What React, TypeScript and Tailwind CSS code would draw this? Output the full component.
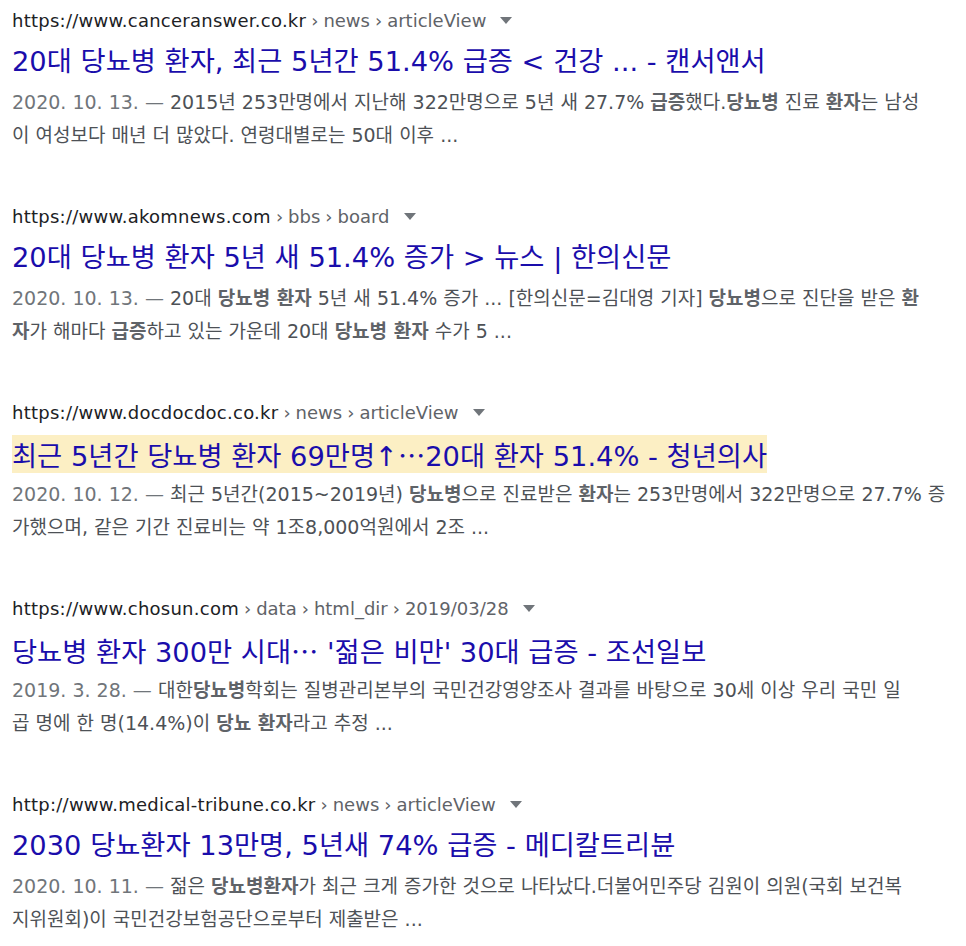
import React from 'react';

type Seg = { t: string; b?: boolean };

interface Result {
  domain: string;
  crumbs: string[];
  title: string;
  highlight?: boolean;
  date: string;
  lines: Seg[][];
}

const results: Result[] = [
  {
    domain: 'https://www.canceranswer.co.kr',
    crumbs: ['news', 'articleView'],
    title: '20대 당뇨병 환자, 최근 5년간 51.4% 급증 < 건강 ... - 캔서앤서',
    date: '2020. 10. 13.',
    lines: [
      [
        { t: '2015년 253만명에서 지난해 322만명으로 5년 새 27.7% ' },
        { t: '급증', b: true },
        { t: '했다.' },
        { t: '당뇨병', b: true },
        { t: ' 진료 ' },
        { t: '환자', b: true },
        { t: '는 남성' },
      ],
      [{ t: '이 여성보다 매년 더 많았다. 연령대별로는 50대 이후 ...' }],
    ],
  },
  {
    domain: 'https://www.akomnews.com',
    crumbs: ['bbs', 'board'],
    title: '20대 당뇨병 환자 5년 새 51.4% 증가 > 뉴스 | 한의신문',
    date: '2020. 10. 13.',
    lines: [
      [
        { t: '20대 ' },
        { t: '당뇨병 환자', b: true },
        { t: ' 5년 새 51.4% 증가 ... [한의신문=김대영 기자] ' },
        { t: '당뇨병', b: true },
        { t: '으로 진단을 받은 ' },
        { t: '환', b: true },
      ],
      [
        { t: '자', b: true },
        { t: '가 해마다 ' },
        { t: '급증', b: true },
        { t: '하고 있는 가운데 20대 ' },
        { t: '당뇨병 환자', b: true },
        { t: ' 수가 5 ...' },
      ],
    ],
  },
  {
    domain: 'https://www.docdocdoc.co.kr',
    crumbs: ['news', 'articleView'],
    title: '최근 5년간 당뇨병 환자 69만명↑…20대 환자 51.4% - 청년의사',
    highlight: true,
    date: '2020. 10. 12.',
    lines: [
      [
        { t: '최근 5년간(2015~2019년) ' },
        { t: '당뇨병', b: true },
        { t: '으로 진료받은 ' },
        { t: '환자', b: true },
        { t: '는 253만명에서 322만명으로 27.7% 증' },
      ],
      [{ t: '가했으며, 같은 기간 진료비는 약 1조8,000억원에서 2조 ...' }],
    ],
  },
  {
    domain: 'https://www.chosun.com',
    crumbs: ['data', 'html_dir', '2019/03/28'],
    title: "당뇨병 환자 300만 시대… '젊은 비만' 30대 급증 - 조선일보",
    date: '2019. 3. 28.',
    lines: [
      [
        { t: '대한' },
        { t: '당뇨병', b: true },
        { t: '학회는 질병관리본부의 국민건강영양조사 결과를 바탕으로 30세 이상 우리 국민 일' },
      ],
      [
        { t: '곱 명에 한 명(14.4%)이 ' },
        { t: '당뇨 환자', b: true },
        { t: '라고 추정 ...' },
      ],
    ],
  },
  {
    domain: 'http://www.medical-tribune.co.kr',
    crumbs: ['news', 'articleView'],
    title: '2030 당뇨환자 13만명, 5년새 74% 급증 - 메디칼트리뷴',
    date: '2020. 10. 11.',
    lines: [
      [
        { t: '젊은 ' },
        { t: '당뇨병환자', b: true },
        { t: '가 최근 크게 증가한 것으로 나타났다.더불어민주당 김원이 의원(국회 보건복' },
      ],
      [{ t: '지위원회)이 국민건강보험공단으로부터 제출받은 ...' }],
    ],
  },
];

const CJK = '"Noto Sans CJK KR", sans-serif';

// the midline ellipsis comes from the Korean font, not DejaVu
function TitleText({ text }: { text: string }) {
  const parts = text.split('…');
  return (
    <>
      {parts.map((p, i) => (
        <React.Fragment key={i}>
          {i > 0 && <span style={{ fontFamily: CJK }}>…</span>}
          {p}
        </React.Fragment>
      ))}
    </>
  );
}

function Caret() {
  return (
    <svg width="12" height="8" viewBox="0 0 12 8" className="ml-[14px] shrink-0">
      <path d="M0 0h12L6 7z" fill="#70757a" />
    </svg>
  );
}

function ResultItem({ r }: { r: Result }) {
  return (
    <div className="flex flex-col">
      <div className="flex items-center h-[27px] text-[18px] leading-[27px] whitespace-nowrap">
        <span className="text-[#202124] tracking-[0.25px]">{r.domain}</span>
        {r.crumbs.map((c) => (
          <span key={c} className="text-[#5f6368]">
            <span className="mx-[5px]">›</span>
            {c}
          </span>
        ))}
        <Caret />
      </div>
      <div className="mt-[9px]">
        <span
          className={
            'inline-block h-[38px] text-[27.3px] leading-[38px] text-[#1a0dab] whitespace-nowrap ' +
            (r.highlight ? 'bg-[#fcefc4]' : '')
          }
        >
          <TitleText text={r.title} />
        </span>
      </div>
      <div className="mt-[5px] text-[19px] leading-[33px] text-[#4d5156]">
        {r.lines.map((line, i) => (
          <div key={i} className="whitespace-nowrap">
            {i === 0 && <span className="text-[#70757a]">{r.date} — </span>}
            {line.map((s, j) =>
              s.b ? (
                <span key={j} className="font-bold text-[#5f6368]">
                  {s.t}
                </span>
              ) : (
                <span key={j}>{s.t}</span>
              )
            )}
          </div>
        ))}
      </div>
    </div>
  );
}

export default function App() {
  return (
    <div
      className="min-h-[946px] bg-white pl-[12px] pt-[7px] flex flex-col gap-[51px]"
      style={{ fontFamily: '"DejaVu Sans", "Noto Sans CJK KR", sans-serif' }}
    >
      {results.map((r) => (
        <ResultItem key={r.domain} r={r} />
      ))}
    </div>
  );
}
